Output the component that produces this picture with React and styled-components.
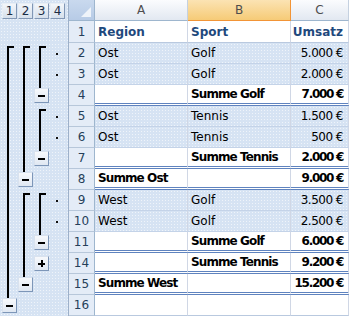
import React from 'react'
import styled, { createGlobalStyle, css } from 'styled-components'

const GlobalStyle = createGlobalStyle`
  html, body { margin: 0; padding: 0; background: #fff; }
  body { font-family: "DejaVu Sans", sans-serif; font-size: 12px; }
  #root { width: 349px; height: 316px; }
`

const dotted = css`
  background-color: #d6e3f3;
  background-image: radial-gradient(rgba(255, 255, 255, 0.6) 0.5px, transparent 0.9px);
  background-size: 3px 3px;
`

const Sheet = styled.div`
  width: 349px;
  height: 316px;
  overflow: hidden;
  display: flex;
  flex-direction: column;
`

const Row = styled.div`
  display: grid;
  grid-template-columns: 69px 26px 93px 103px 58px;
  height: ${p => p.h}px;
  flex: none;
`

// left outline pane
const Outline = styled.div`
  ${dotted}
  border-right: 1px solid #9db0c9;
  display: flex;
  gap: 1px;
  padding-left: 2px;
  box-sizing: border-box;
`

const Slot = styled.div`
  width: 15px;
  display: flex;
  flex-direction: column;
  justify-content: ${p => (p.center ? 'center' : 'flex-start')};
`

const Line = styled.div`
  width: 2px;
  margin-left: 5px;
  background: #000;
  flex: ${p => (p.len ? 'none' : 1)};
  height: ${p => (p.len ? `${p.len}px` : 'auto')};
`

const BracketTop = styled.div`
  flex: 1;
  margin: 3px 0 0 5px;
  width: 5px;
  border-left: 2px solid #000;
  border-top: 2px solid #000;
`

const Dot = styled.div`
  width: 2px;
  height: 2px;
  margin-left: 6px;
  background: #111;
`

const OutBtn = styled.div`
  box-sizing: border-box;
  width: 15px;
  height: 15px;
  margin-top: ${p => p.mt || 0}px;
  background: linear-gradient(#f7f9fc, #dfe7f2);
  border: 1px solid;
  border-color: #d9e2ee #7d96b8 #7d96b8 #d9e2ee;
  display: flex;
  align-items: center;
  justify-content: center;
`

const Bar = styled.span`
  display: block;
  width: 7px;
  height: 2px;
  background: #000;
`

const Cross = styled.span`
  display: block;
  width: 7px;
  height: 7px;
  background:
    linear-gradient(#000, #000) center / 7px 2px no-repeat,
    linear-gradient(#000, #000) center / 2px 7px no-repeat;
`

const LevelBtn = styled.div`
  box-sizing: border-box;
  width: 15px;
  height: 16px;
  margin-top: 3px;
  background: linear-gradient(#f3f6fa, #d6e0ec);
  border: 1px solid;
  border-color: #e8eef5 #8297b5 #8297b5 #e8eef5;
  color: #1b2d44;
  font-size: 12px;
  line-height: 14px;
  text-align: center;
`

// sheet
const Corner = styled.div`
  background: linear-gradient(#c9d9ee, #b7cbe6);
  border-right: 1px solid #9eb6ce;
  border-bottom: 1px solid #9eb6ce;
  display: flex;
  align-items: flex-end;
  justify-content: flex-end;
  padding: 0 3px 3px 0;
  box-sizing: border-box;
`

const ColHead = styled.div`
  box-sizing: border-box;
  background: ${p => (p.sel ? 'linear-gradient(#fbe3b3, #f6cb77)' : 'linear-gradient(#fbfcfe, #e2e8f1)')};
  border-right: 1px solid ${p => (p.sel ? '#f29436' : '#c5d1e0')};
  border-bottom: 1px solid ${p => (p.sel ? '#f29436' : '#9eb6ce')};
  color: #4d4d4d;
  text-align: center;
  line-height: 20px;
  font-size: 12px;
`

const RowHead = styled.div`
  box-sizing: border-box;
  background: #e4ecf7;
  border-right: 1px solid #9eb6ce;
  border-bottom: 1px solid #b7c7da;
  color: #253f5a;
  display: flex;
  align-items: center;
  justify-content: center;
  font-size: 12px;
`

const Cell = styled.div`
  box-sizing: border-box;
  display: flex;
  align-items: center;
  justify-content: ${p => (p.num ? 'flex-end' : 'flex-start')};
  padding: ${p => (p.num ? '0 5px 0 0' : '0 0 0 3px')};
  white-space: nowrap;
  overflow: hidden;
  border-right: 1px solid #d0d7e5;
  border-bottom: ${p => (p.kind === 'sum' ? '3px double #5f83bf' : p.kind === 'detail' ? '1px solid #c4d3e8' : '1px solid #b9c9df')};
  ${p => (p.kind === 'detail' ? dotted : 'background: #fff;')}
  color: #000;
  font-weight: ${p => (p.bold ? 700 : 400)};
  letter-spacing: ${p => (p.bold ? (p.num ? '-1.3px' : '-0.9px') : p.num ? '-0.5px' : '0')};
  ${p => p.kind === 'head' && 'color: #1f497d; font-weight: 700; letter-spacing: 0;'}
`

const Triangle = () => (
  <svg width="10" height="10" viewBox="0 0 10 10">
    <polygon points="10,0 10,10 0,10" fill="#eef3f9" />
  </svg>
)

const rows = [
  { n: 1, h: 22, kind: 'head', a: 'Region', b: 'Sport', c: 'Umsatz', out: [] },
  { n: 2, kind: 'detail', a: 'Ost', b: 'Golf', c: '5.000 €', out: ['top', 'top', 'top', 'dot'] },
  { n: 3, kind: 'detail', a: 'Ost', b: 'Golf', c: '2.000 €', out: ['line', 'line', 'line', 'dot'] },
  { n: 4, kind: 'sum', a: '', b: 'Summe Golf', c: '7.000 €', out: ['line', 'line', 'minus'] },
  { n: 5, kind: 'detail', a: 'Ost', b: 'Tennis', c: '1.500 €', out: ['line', 'line', 'top', 'dot'] },
  { n: 6, kind: 'detail', a: 'Ost', b: 'Tennis', c: '500 €', out: ['line', 'line', 'line', 'dot'] },
  { n: 7, kind: 'sum', a: '', b: 'Summe Tennis', c: '2.000 €', out: ['line', 'line', 'minus'] },
  { n: 8, kind: 'sum', a: 'Summe Ost', b: '', c: '9.000 €', out: ['line', 'minus'] },
  { n: 9, kind: 'detail', a: 'West', b: 'Golf', c: '3.500 €', out: ['line', 'top', 'top', 'dot'] },
  { n: 10, kind: 'detail', a: 'West', b: 'Golf', c: '2.500 €', out: ['line', 'line', 'line', 'dot'] },
  { n: 11, kind: 'sum', a: '', b: 'Summe Golf', c: '6.000 €', out: ['line', 'line', 'minus'] },
  { n: 14, kind: 'sum', a: '', b: 'Summe Tennis', c: '9.200 €', out: ['line', 'line', 'plus'] },
  { n: 15, kind: 'sum', a: 'Summe West', b: '', c: '15.200 €', out: ['line', 'minus'] },
  { n: 16, kind: 'blank', a: '', b: '', c: '', out: ['minus'] },
]

function Mark({ type }) {
  if (type === 'line') return <Slot><Line /></Slot>
  if (type === 'top') return <Slot><BracketTop /></Slot>
  if (type === 'dot') return <Slot center><Dot /></Slot>
  if (type === 'minus')
    return (
      <Slot>
        <Line len={3} />
        <OutBtn><Bar /></OutBtn>
      </Slot>
    )
  if (type === 'plus')
    return (
      <Slot>
        <OutBtn mt={3}><Cross /></OutBtn>
      </Slot>
    )
  return <Slot />
}

export default function App() {
  return (
    <>
      <GlobalStyle />
      <Sheet>
        <Row h={21}>
          <Outline>
            {[1, 2, 3, 4].map(l => <LevelBtn key={l}>{l}</LevelBtn>)}
          </Outline>
          <Corner><Triangle /></Corner>
          <ColHead>A</ColHead>
          <ColHead sel>B</ColHead>
          <ColHead>C</ColHead>
        </Row>
        {rows.map(r => {
          const sum = r.kind === 'sum'
          return (
            <Row key={r.n} h={r.h || 21}>
              <Outline>
                {r.out.map((t, i) => <Mark key={i} type={t} />)}
              </Outline>
              <RowHead>{r.n}</RowHead>
              <Cell kind={r.kind} bold={sum}>{r.a}</Cell>
              <Cell kind={r.kind} bold={sum}>{r.b}</Cell>
              <Cell kind={r.kind} bold={sum} num>{r.c}</Cell>
            </Row>
          )
        })}
      </Sheet>
    </>
  )
}
